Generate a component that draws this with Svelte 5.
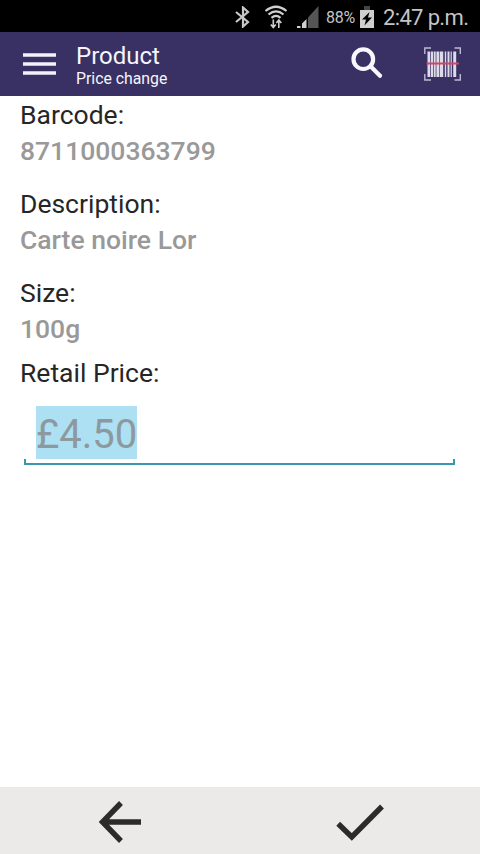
<script lang="ts">
	interface Field {
		label: string;
		value: string;
	}

	const fields: Field[] = [
		{ label: 'Barcode:', value: '8711000363799' },
		{ label: 'Description:', value: 'Carte noire Lor' },
		{ label: 'Size:', value: '100g' }
	];

	// x offset and width of each stripe in the scanner icon
	const bars = [
		[3.5, 2.8],
		[7, 2],
		[9.7, 2],
		[12.4, 2.8],
		[15.8, 3.4],
		[20.8, 1.4],
		[23.5, 2],
		[26.6, 1.2],
		[29.2, 3]
	];

	let price = $state('£4.50');
</script>

<div class="screen">
	<div class="status">
		<svg class="bluetooth" width="16" height="22" viewBox="0 0 16 22">
			<path d="M1 6L13 16L8 20.5V1.5L13 6L1 16" />
		</svg>
		<svg class="wifi" width="24" height="24" viewBox="0 0 24 24">
			<path class="arc" d="M1.5 6Q12-2.5 22.5 6M4.5 9.5Q12 3.2 19.5 9.5M7.5 12.8Q12 9 16.5 12.8" />
			<path class="arrows" d="M9.3 14.5V22M6.8 19.5L9.3 22.5L11.8 19.5M14.8 23V15.5M12.3 18L14.8 15L17.3 18" />
		</svg>
		<svg class="signal" width="22" height="22" viewBox="0 0 22 22">
			<path class="off" d="M11 11.5L21.5 0V22H11Z" />
			<path d="M0 20h3.5V22H0ZM5 17.5L9.5 13V22H5Z" />
		</svg>
		<span class="percent">88%</span>
		<svg class="battery" width="14" height="22" viewBox="0 0 14 22">
			<path class="cap" d="M4 0h6v4H4Z" />
			<path d="M0 4h14v18H0Z" />
			<path class="bolt" d="M9.5 6L2 13.5H6L4.5 19.5L12 11.5H8Z" />
		</svg>
		<span class="clock">2:47 p.m.</span>
	</div>

	<header>
		<svg class="menu" width="33" height="24" viewBox="0 0 33 24">
			<path d="M0 3H33M0 12H33M0 21H33" />
		</svg>
		<div class="title">
			<h1>Product</h1>
			<p>Price change</p>
		</div>
		<svg class="search" width="34" height="34" viewBox="0 0 34 34">
			<circle cx="13.3" cy="12.2" r="9.8" />
			<path d="M20.5 19.2L30 28.7" />
		</svg>
		<svg class="scan" width="38" height="34" viewBox="0 0 38 34">
			<path class="corner" d="M.8 7V1H7M30.5 1H36.3V7M.8 27V33H7M30.5 33H36.3V27" />
			{#each bars as [x, width]}
				<rect {x} y="4.5" {width} height="25.5" />
			{/each}
			<path class="laser" d="M2.5 16.5H35" />
		</svg>
	</header>

	<main>
		{#each fields as field}
			<div class="field">
				<div class="label">{field.label}</div>
				<div class="value">{field.value}</div>
			</div>
		{/each}
		<div class="label retail">Retail Price:</div>
		<div class="price">
			<span class="selected">{price}</span>
		</div>
	</main>

	<footer>
		<button aria-label="Back">
			<svg width="44" height="44" viewBox="0 0 44 44">
				<path d="M43 22H5M23 3L4.5 22L23 41" />
			</svg>
		</button>
		<button aria-label="Confirm">
			<svg width="48" height="44" viewBox="0 0 48 44">
				<path d="M2.2 23.7L15.8 37L46 6.5" />
			</svg>
		</button>
	</footer>
</div>

<style>
	:global(body) {
		margin: 0;
	}

	.screen {
		display: flex;
		flex-direction: column;
		width: 480px;
		height: 854px;
		overflow: hidden;
		background: #fff;
		color: #262626;
		font-family: Roboto, sans-serif;
	}

	svg {
		display: block;
		flex: none;
	}

	.status {
		display: flex;
		align-items: center;
		height: 32px;
		box-sizing: border-box;
		padding: 2px 0 0 235px;
		background: #000;
		color: #c4c4c4;
		fill: #cfcfcf;
		white-space: nowrap;
	}

	.bluetooth {
		fill: none;
		stroke: #c8c8c8;
		stroke-width: 2.2;
	}

	.wifi {
		margin-left: 13px;
		fill: none;
		stroke: #cfcfcf;
		stroke-width: 2.2;
	}

	.arrows {
		stroke-width: 1.6;
	}

	.signal {
		margin-left: 9px;
	}

	.off {
		fill: #555;
	}

	.percent {
		width: 30px;
		margin-left: 7px;
		font-size: 16px;
		letter-spacing: -0.2px;
	}

	.battery {
		margin-left: 4px;
	}

	.cap {
		fill: #444;
	}

	.bolt {
		fill: #000;
	}

	.clock {
		margin-left: 9px;
		font-size: 22px;
		letter-spacing: -0.65px;
	}

	header {
		display: flex;
		align-items: center;
		height: 64px;
		box-sizing: border-box;
		padding: 0 18px 0 23px;
		background: #393163;
		color: #f6f5fc;
	}

	.menu {
		stroke: #f4f2fc;
		stroke-width: 3.6;
	}

	.title {
		flex: 1;
		margin-left: 20px;
		padding-top: 2px;
	}

	h1 {
		margin: 0;
		font-size: 24px;
		font-weight: 400;
		line-height: 26px;
	}

	.title p {
		margin: 0;
		font-size: 15.8px;
		line-height: 19px;
	}

	.search {
		margin-right: 40px;
		fill: none;
		stroke: #f8f7fd;
		stroke-width: 4.2;
		stroke-linecap: round;
	}

	.scan {
		fill: #dddaea;
	}

	.corner {
		fill: none;
		stroke: #bdb9d3;
		stroke-width: 1.4;
	}

	.laser {
		stroke: #d04763;
		stroke-width: 2;
	}

	main {
		flex: 1;
		padding: 1px 20px 0;
	}

	.field {
		margin-bottom: 17px;
	}

	.label,
	.value {
		font-size: 26.5px;
		line-height: 36px;
	}

	.value {
		color: #999;
		font-weight: 500;
	}

	.label.retail {
		margin-top: -9px;
	}

	.price {
		position: relative;
		margin: 15px 5px 0 4px;
		padding-left: 12px;
		height: 59px;
		box-sizing: border-box;
		border-bottom: 2px solid #3b96b4;
	}

	/* short upturned ends of the input underline */
	.price::before,
	.price::after {
		content: '';
		position: absolute;
		bottom: 0;
		width: 2px;
		height: 4px;
		background: #3b96b4;
	}

	.price::before {
		left: 0;
	}

	.price::after {
		right: 0;
	}

	.selected {
		display: inline-block;
		height: 53px;
		background: #ade0f3;
		color: #8c999e;
		font-size: 40px;
		line-height: 58px;
	}

	footer {
		display: flex;
		height: 67px;
		background: #ebeae9;
	}

	button {
		display: flex;
		flex: 1;
		align-items: center;
		justify-content: center;
		padding: 2px 0 0;
		border: 0;
		background: none;
	}

	button svg {
		fill: none;
		stroke: #2b2b2b;
		stroke-width: 5.4;
	}
</style>
